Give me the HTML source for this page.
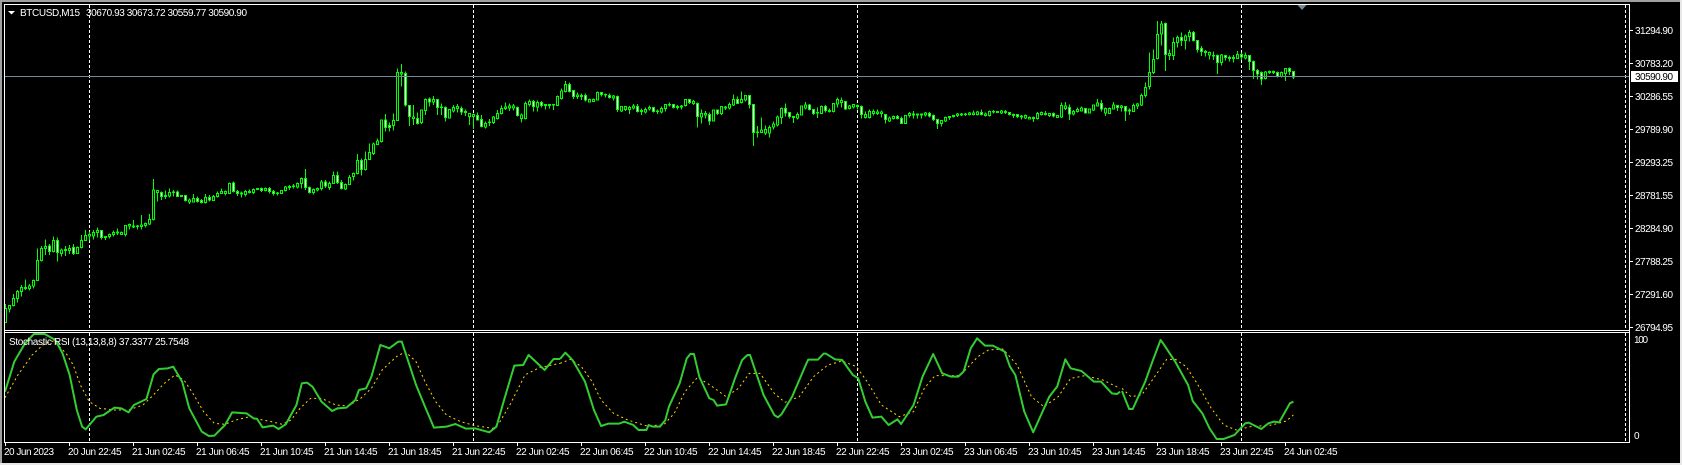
<!DOCTYPE html>
<html><head><meta charset="utf-8"><title>BTCUSD,M15</title>
<style>
html,body{margin:0;padding:0;background:#000;width:1682px;height:465px;overflow:hidden}
svg{display:block}
text{font-family:"Liberation Sans",sans-serif;font-size:10px;fill:#fff}
.w,.u,.d{stroke:#0f0;stroke-width:1;vector-effect:non-scaling-stroke;shape-rendering:crispEdges}
.w{fill:none}.u{fill:#000}.d{fill:#fff}
.g{fill:none;stroke:#32cd32;stroke-width:2;vector-effect:non-scaling-stroke;stroke-linejoin:round}
.y{fill:none;stroke:#ffd700;stroke-width:1;stroke-dasharray:2 3;vector-effect:non-scaling-stroke}
</style></head><body>
<svg width="1682" height="465" viewBox="0 0 1682 465" xmlns="http://www.w3.org/2000/svg">
<rect width="1682" height="465" fill="#000"/>
<rect x="0" y="0" width="1682" height="2" fill="#a0a0a0"/>
<rect x="0" y="0" width="2" height="465" fill="#a0a0a0"/>
<rect x="1680" y="0" width="2" height="465" fill="#e8e8e8"/>
<rect x="0" y="463" width="1682" height="2" fill="#e8e8e8"/>

<g stroke="#fff" stroke-width="1" stroke-dasharray="3 2" shape-rendering="crispEdges">
<path d="M89.5 5V330M473.5 5V330M857.5 5V330M1241.5 5V330M1625.5 5V330M89.5 333V442M473.5 333V442M857.5 333V442M1241.5 333V442M1625.5 333V442"/>
</g>

<!-- candles i0-103 -->
<g transform="scale(1,.33333)">
<path class="w" d="M5.5 912V968M9.5 915V938M13.5 882V920M17.5 870V908M21.5 855V890M25.5 838V870M29.5 852V872M33.5 838V865M37.5 745V842M41.5 738V785M45.5 718V765M49.5 732V765M53.5 710V758M57.5 712V785M61.5 745V770M65.5 738V768M69.5 735V762M73.5 732V765M77.5 740V760M81.5 705V745M85.5 690V722M89.5 695V722M93.5 690V718M97.5 682V712M101.5 690V718M105.5 708V720M109.5 700V716M113.5 692V710M117.5 686V705M121.5 695V705M125.5 675V710M129.5 670V688M133.5 660V684M137.5 675V688M141.5 645V688M145.5 668V682M149.5 642V675M153.5 537V662M157.5 570V605M161.5 575V600M165.5 572V597M169.5 565V592M173.5 570V590M177.5 572V590M181.5 585V590M185.5 585V605M189.5 596V612M193.5 582V608M197.5 590V607M201.5 597V610M205.5 582V610M209.5 585V605M213.5 585V603M217.5 575V592M221.5 565V582M225.5 572V587M229.5 548V582M233.5 545V578M237.5 570V588M241.5 575V593M245.5 570V590M249.5 568V580M253.5 566V582M257.5 565V570M261.5 562V576M265.5 563V575M269.5 561V580M273.5 570V587M277.5 576V586M281.5 570V582M285.5 558V574M289.5 555V570M293.5 552V565M297.5 548V565M301.5 532V565M305.5 507V570M309.5 560V580M313.5 565V584M317.5 562V574M321.5 540V572M325.5 540V564M329.5 545V570M333.5 514V552M337.5 514V552M341.5 540V568M345.5 550V570M349.5 525V555M353.5 517V542M357.5 462V523M361.5 475V527M365.5 455V512M369.5 430V480M373.5 428V465M377.5 415V435M381.5 358V428M385.5 342V395M389.5 368V395M393.5 340V392M397.5 205V362M401.5 192V260M405.5 215V320M409.5 315V378M413.5 315V375M417.5 337V373"/>
<path class="u" d="M4.5 925h2V968h-2zM8.5 917h2V927h-2zM12.5 895h2V917h-2zM16.5 875h2V895h-2zM20.5 862h2V875h-2zM24.5 862h2V866h-2zM28.5 858h2V866h-2zM32.5 842h2V858h-2zM36.5 782h2V842h-2zM40.5 745h2V782h-2zM44.5 740h2V746h-2zM52.5 722h2V755h-2zM60.5 750h2V760h-2zM64.5 748h2V752h-2zM68.5 745h2V752h-2zM76.5 742h2V760h-2zM80.5 722h2V742h-2zM84.5 706h2V722h-2zM88.5 704h2V708h-2zM92.5 698h2V708h-2zM96.5 692h2V698h-2zM104.5 709h2V713h-2zM108.5 703h2V710h-2zM112.5 697h2V704h-2zM116.5 696h2V699h-2zM120.5 697h2V703h-2zM124.5 677h2V704h-2zM128.5 673h2V678h-2zM132.5 678h2V681h-2zM136.5 678h2V680h-2zM140.5 675h2V680h-2zM144.5 671h2V677h-2zM148.5 658h2V672h-2zM152.5 570h2V658h-2zM156.5 572h2V578h-2zM164.5 586h2V590h-2zM168.5 577h2V588h-2zM172.5 576h2V578h-2zM180.5 587h2V590h-2zM188.5 600h2V606h-2zM192.5 596h2V606h-2zM204.5 592h2V608h-2zM212.5 589h2V601h-2zM216.5 581h2V590h-2zM220.5 574h2V581h-2zM224.5 575h2V581h-2zM228.5 550h2V581h-2zM240.5 579h2V582h-2zM244.5 574h2V584h-2zM248.5 574h2V577h-2zM252.5 568h2V578h-2zM256.5 566h2V568h-2zM264.5 566h2V572h-2zM276.5 579h2V581h-2zM280.5 571h2V581h-2zM284.5 561h2V571h-2zM288.5 559h2V563h-2zM292.5 558h2V560h-2zM296.5 551h2V561h-2zM300.5 535h2V550h-2zM312.5 569h2V578h-2zM316.5 565h2V570h-2zM320.5 546h2V565h-2zM328.5 550h2V562h-2zM332.5 526h2V550h-2zM344.5 553h2V567h-2zM348.5 532h2V553h-2zM352.5 521h2V530h-2zM356.5 481h2V521h-2zM364.5 478h2V508h-2zM368.5 457h2V478h-2zM372.5 432h2V460h-2zM376.5 423h2V433h-2zM380.5 360h2V425h-2zM392.5 361h2V376h-2zM396.5 217h2V361h-2zM400.5 218h2V222h-2zM412.5 351h2V355h-2z"/>
<path class="d" d="M48.5 738h2V755h-2zM56.5 722h2V758h-2zM72.5 742h2V760h-2zM100.5 692h2V712h-2zM160.5 577h2V590h-2zM176.5 576h2V590h-2zM184.5 587h2V602h-2zM196.5 596h2V604h-2zM200.5 601h2V607h-2zM208.5 592h2V600h-2zM232.5 549h2V575h-2zM236.5 575h2V580h-2zM260.5 565h2V571h-2zM268.5 565h2V575h-2zM272.5 574h2V580h-2zM304.5 535h2V562h-2zM308.5 562h2V578h-2zM324.5 546h2V558h-2zM336.5 526h2V548h-2zM340.5 548h2V565h-2zM360.5 481h2V508h-2zM384.5 360h2V382h-2zM388.5 376h2V382h-2zM404.5 220h2V315h-2zM408.5 317h2V350h-2zM416.5 355h2V370h-2z"/>
</g>

<!-- candles i104-281 -->
<g transform="translate(0,50) scale(1,.33333)">
<path class="w" d="M421.5 178V222M425.5 145V195M429.5 142V170M433.5 138V165M437.5 147V195M441.5 160V195M445.5 170V215M449.5 177V205M453.5 165V188M457.5 162V188M461.5 170V195M465.5 178V198M469.5 190V225M473.5 190V237M477.5 188V212M481.5 195V232M485.5 215V235M489.5 207V228M493.5 198V222M497.5 180V208M501.5 167V193M505.5 157V180M509.5 160V183M513.5 162V182M517.5 170V200M521.5 190V218M525.5 155V208M529.5 148V170M533.5 150V185M537.5 152V185M541.5 153V172M545.5 163V178M549.5 163V175M553.5 163V180M557.5 137V168M561.5 115V148M565.5 93V127M569.5 97V127M573.5 120V147M577.5 128V147M581.5 130V150M585.5 130V155M589.5 145V158M593.5 145V156M597.5 125V152M601.5 127V140M605.5 130V142M609.5 130V145M613.5 135V152M617.5 136V186M621.5 168V186M625.5 168V183M629.5 168V192M633.5 162V178M637.5 162V187M641.5 175V195M645.5 172V190M649.5 166V182M653.5 171V187M657.5 178V192M661.5 170V190M665.5 162V185M669.5 158V170M673.5 162V175M677.5 165V178M681.5 165V178M685.5 148V170M689.5 148V162M693.5 150V165M697.5 157V232M701.5 178V220M705.5 183V205M709.5 188V225M713.5 178V215M717.5 178V195M721.5 168V195M725.5 168V180M729.5 157V178M733.5 133V168M737.5 140V162M741.5 124V160M745.5 135V155M749.5 135V175M753.5 163V288M757.5 228V263M761.5 202V248M765.5 226V255M769.5 226V263M773.5 215V238M777.5 197V230M781.5 172V222M785.5 160V200M789.5 186V205M793.5 198V219M797.5 188V208M801.5 167V197M805.5 156V178M809.5 162V182M813.5 177V195M817.5 172V204M821.5 167V192M825.5 165V187M829.5 175V187M833.5 160V187M837.5 143V172M841.5 142V172M845.5 153V180M849.5 165V178M853.5 163V175M857.5 163V178M861.5 167V205M865.5 185V205M869.5 178V205M873.5 178V196M877.5 178V195M881.5 182V202M885.5 192V221M889.5 200V216M893.5 197V208M897.5 195V208M901.5 200V222M905.5 195V222M909.5 186V202M913.5 183V205M917.5 190V205M921.5 190V205M925.5 186V200M929.5 186V202M933.5 193V213M937.5 207V237M941.5 210V230M945.5 200V216M949.5 198V210M953.5 195V202M957.5 189V201M961.5 189V198M965.5 189V198M969.5 186V196M973.5 181V196M977.5 183V197M981.5 178V197M985.5 187V200M989.5 182V200M993.5 180V190M997.5 183V189M1001.5 180V192M1005.5 180V192M1009.5 186V197M1013.5 190V204M1017.5 192V204M1021.5 195V209M1025.5 193V207M1029.5 200V209M1033.5 200V216M1037.5 186V208M1041.5 185V197M1045.5 183V197M1049.5 190V201M1053.5 188V203M1057.5 195V204M1061.5 158V204M1065.5 156V180M1069.5 163V210M1073.5 180V196M1077.5 172V188M1081.5 170V185M1085.5 175V190M1089.5 177V190M1093.5 163V183M1097.5 147V170M1101.5 150V185M1105.5 172V198M1109.5 172V192M1113.5 156V178M1117.5 165V183M1121.5 165V185M1125.5 168V213M1129.5 175V195"/>
<path class="u" d="M420.5 180h2V218h-2zM424.5 148h2V182h-2zM432.5 148h2V156h-2zM440.5 171h2V173h-2zM448.5 178h2V204h-2zM452.5 172h2V183h-2zM456.5 170h2V176h-2zM464.5 184h2V188h-2zM468.5 190h2V200h-2zM472.5 193h2V200h-2zM484.5 220h2V231h-2zM488.5 216h2V218h-2zM492.5 201h2V218h-2zM496.5 190h2V206h-2zM500.5 175h2V190h-2zM504.5 171h2V176h-2zM508.5 168h2V174h-2zM512.5 168h2V174h-2zM520.5 195h2V206h-2zM524.5 160h2V206h-2zM528.5 154h2V164h-2zM536.5 157h2V171h-2zM544.5 163h2V167h-2zM548.5 163h2V167h-2zM552.5 164h2V165h-2zM556.5 139h2V166h-2zM560.5 123h2V145h-2zM564.5 103h2V125h-2zM576.5 135h2V140h-2zM580.5 136h2V140h-2zM588.5 148h2V156h-2zM592.5 148h2V155h-2zM596.5 127h2V150h-2zM604.5 133h2V135h-2zM612.5 138h2V144h-2zM620.5 170h2V183h-2zM624.5 170h2V178h-2zM628.5 172h2V178h-2zM632.5 168h2V174h-2zM640.5 181h2V184h-2zM644.5 178h2V186h-2zM648.5 172h2V177h-2zM656.5 183h2V185h-2zM660.5 175h2V186h-2zM664.5 163h2V176h-2zM668.5 163h2V165h-2zM676.5 169h2V173h-2zM680.5 168h2V171h-2zM684.5 149h2V167h-2zM692.5 155h2V161h-2zM700.5 190h2V201h-2zM704.5 190h2V195h-2zM712.5 180h2V213h-2zM720.5 169h2V190h-2zM724.5 171h2V174h-2zM728.5 163h2V174h-2zM732.5 148h2V165h-2zM740.5 148h2V158h-2zM744.5 137h2V150h-2zM756.5 246h2V248h-2zM760.5 240h2V248h-2zM764.5 238h2V249h-2zM768.5 233h2V249h-2zM772.5 222h2V231h-2zM776.5 201h2V225h-2zM780.5 175h2V203h-2zM792.5 199h2V203h-2zM796.5 193h2V204h-2zM800.5 168h2V195h-2zM804.5 165h2V174h-2zM816.5 187h2V189h-2zM820.5 169h2V191h-2zM828.5 181h2V185h-2zM832.5 160h2V185h-2zM836.5 149h2V162h-2zM840.5 151h2V157h-2zM848.5 168h2V175h-2zM852.5 164h2V171h-2zM856.5 166h2V170h-2zM864.5 193h2V203h-2zM868.5 184h2V203h-2zM872.5 184h2V191h-2zM876.5 186h2V190h-2zM880.5 186h2V190h-2zM888.5 204h2V213h-2zM892.5 199h2V206h-2zM904.5 196h2V220h-2zM908.5 191h2V197h-2zM912.5 192h2V195h-2zM916.5 192h2V195h-2zM920.5 192h2V195h-2zM924.5 189h2V195h-2zM940.5 211h2V220h-2zM944.5 202h2V213h-2zM948.5 199h2V203h-2zM952.5 196h2V200h-2zM956.5 192h2V197h-2zM960.5 192h2V195h-2zM964.5 192h2V194h-2zM968.5 189h2V193h-2zM972.5 189h2V194h-2zM976.5 186h2V194h-2zM984.5 192h2V197h-2zM988.5 184h2V197h-2zM992.5 184h2V186h-2zM996.5 184h2V188h-2zM1000.5 183h2V189h-2zM1004.5 184h2V188h-2zM1012.5 193h2V196h-2zM1020.5 198h2V201h-2zM1024.5 197h2V204h-2zM1028.5 202h2V207h-2zM1032.5 203h2V205h-2zM1036.5 190h2V206h-2zM1040.5 188h2V194h-2zM1044.5 190h2V193h-2zM1048.5 191h2V196h-2zM1056.5 196h2V202h-2zM1060.5 166h2V201h-2zM1064.5 168h2V176h-2zM1072.5 184h2V192h-2zM1076.5 178h2V184h-2zM1080.5 174h2V183h-2zM1088.5 177h2V189h-2zM1092.5 165h2V180h-2zM1096.5 159h2V168h-2zM1104.5 176h2V189h-2zM1108.5 175h2V190h-2zM1112.5 165h2V177h-2zM1120.5 168h2V173h-2zM1128.5 180h2V183h-2z"/>
<path class="d" d="M428.5 147h2V156h-2zM436.5 148h2V172h-2zM444.5 172h2V203h-2zM460.5 176h2V186h-2zM476.5 196h2V210h-2zM480.5 208h2V230h-2zM516.5 172h2V197h-2zM532.5 154h2V170h-2zM540.5 157h2V167h-2zM568.5 103h2V125h-2zM572.5 122h2V140h-2zM584.5 136h2V150h-2zM600.5 127h2V133h-2zM608.5 136h2V143h-2zM616.5 139h2V178h-2zM636.5 169h2V185h-2zM652.5 172h2V185h-2zM672.5 163h2V173h-2zM688.5 149h2V158h-2zM696.5 160h2V200h-2zM708.5 194h2V213h-2zM716.5 180h2V190h-2zM736.5 148h2V160h-2zM748.5 136h2V164h-2zM752.5 164h2V248h-2zM784.5 175h2V189h-2zM788.5 187h2V200h-2zM808.5 165h2V178h-2zM812.5 178h2V190h-2zM824.5 169h2V182h-2zM844.5 155h2V177h-2zM860.5 169h2V194h-2zM884.5 193h2V209h-2zM896.5 199h2V205h-2zM900.5 205h2V220h-2zM928.5 190h2V198h-2zM932.5 196h2V208h-2zM936.5 208h2V221h-2zM980.5 187h2V193h-2zM1008.5 187h2V194h-2zM1016.5 194h2V200h-2zM1052.5 191h2V198h-2zM1068.5 172h2V192h-2zM1084.5 175h2V189h-2zM1100.5 160h2V177h-2zM1116.5 166h2V173h-2zM1124.5 169h2V183h-2z"/>
</g>

<!-- candles i282-322 -->
<g transform="scale(1,.33333)">
<path class="w" d="M1133.5 310V336M1137.5 309V327M1141.5 280V318M1145.5 247V292M1149.5 157V268M1153.5 148V222M1157.5 63V178M1161.5 63V137M1165.5 68V213M1169.5 148V180M1173.5 113V180M1177.5 107V143M1181.5 97V138M1185.5 103V148M1189.5 90V125M1193.5 93V125M1197.5 120V157M1201.5 138V168M1205.5 150V170M1209.5 155V178M1213.5 155V180M1217.5 163V222M1221.5 162V197M1225.5 165V182M1229.5 167V185M1233.5 165V187M1237.5 153V177M1241.5 157V180M1245.5 157V178M1249.5 165V210M1253.5 182V237M1257.5 207V238M1261.5 215V255M1265.5 213V238M1269.5 211V222M1273.5 211V222M1277.5 215V232M1281.5 215V232M1285.5 205V243M1289.5 203V225M1293.5 213V237"/>
<path class="u" d="M1132.5 316h2V335h-2zM1136.5 312h2V318h-2zM1140.5 286h2V315h-2zM1144.5 262h2V286h-2zM1148.5 217h2V260h-2zM1152.5 178h2V218h-2zM1156.5 103h2V176h-2zM1160.5 72h2V102h-2zM1168.5 160h2V167h-2zM1172.5 127h2V167h-2zM1176.5 112h2V128h-2zM1184.5 108h2V121h-2zM1188.5 97h2V110h-2zM1204.5 154h2V158h-2zM1208.5 157h2V165h-2zM1212.5 166h2V168h-2zM1220.5 165h2V188h-2zM1228.5 172h2V176h-2zM1232.5 173h2V175h-2zM1236.5 163h2V176h-2zM1244.5 166h2V174h-2zM1264.5 216h2V236h-2zM1268.5 214h2V218h-2zM1272.5 214h2V218h-2zM1280.5 218h2V230h-2zM1284.5 206h2V220h-2z"/>
<path class="d" d="M1164.5 70h2V163h-2zM1180.5 112h2V122h-2zM1192.5 97h2V122h-2zM1196.5 122h2V148h-2zM1200.5 146h2V155h-2zM1216.5 166h2V188h-2zM1224.5 167h2V173h-2zM1240.5 163h2V171h-2zM1248.5 167h2V185h-2zM1252.5 184h2V212h-2zM1256.5 211h2V222h-2zM1260.5 218h2V237h-2zM1276.5 218h2V229h-2zM1288.5 205h2V215h-2zM1292.5 215h2V231h-2z"/>
</g>

<!-- price line -->
<rect x="5" y="76" width="1624" height="1" fill="#778899"/>
<polygon points="1297.5,5 1306.5,5 1302,10" fill="#778899"/>

<!-- Stochastic -->
<g transform="translate(0,325) scale(.35714,.33333)">
<polyline class="y" points="14,218 50,150 90,90 125,55 150,48 185,85 205,120 225,180 250,230 280,250 320,255 360,255 400,240 425,215 460,175 490,150 515,165 540,205 570,260 600,295 630,298 660,285 700,275 735,285 760,290 790,298 815,285 840,250 870,220 900,220 940,240 975,243 1010,220 1040,190 1070,135 1110,95 1135,80 1165,110 1190,170 1220,230 1250,270 1290,290 1330,302 1380,310 1400,290 1430,235 1470,150 1510,128 1568,115"/>
<polyline class="g" points="14,200 40,110 70,55 95,27 125,27 155,45 175,85 195,150 215,255 230,305 240,313 270,275 290,270 320,248 340,250 360,262 375,240 410,222 430,148 445,132 470,130 485,125 510,170 530,250 565,320 585,333 600,332 630,300 650,262 690,265 710,280 720,282 735,307 765,302 780,312 800,298 830,240 845,175 860,173 875,185 900,230 930,258 945,250 970,248 995,225 1005,195 1025,190 1040,155 1065,60 1090,70 1115,50 1125,50 1165,180 1190,245 1215,308 1250,305 1275,297 1305,311 1330,310 1370,322 1390,305 1410,230 1440,122 1465,120 1480,90 1495,105 1525,135 1550,102 1568,102"/>
</g>
<g transform="translate(560,325) scale(.35714,.33333)">
<polyline class="y" points="0,115 30,103 60,125 90,170 115,225 150,265 190,285 240,302 290,300 320,265 350,200 385,157 420,180 465,215 500,190 530,145 560,145 600,205 630,232 670,215 710,155 750,120 790,108 830,125 860,170 900,240 950,275 990,260 1020,190 1050,152 1120,152 1170,95 1200,75 1240,72 1280,120 1320,215 1355,245 1395,215 1430,160 1470,152 1520,165 1568,190"/>
<polyline class="g" points="0,102 15,83 35,105 70,170 95,255 115,303 135,296 165,296 180,290 205,300 220,315 242,315 248,300 260,305 280,305 295,285 305,245 335,175 355,100 365,87 375,87 390,155 418,220 430,225 440,242 465,238 490,160 510,105 525,90 532,90 570,210 600,270 610,277 620,268 650,215 690,115 695,104 722,104 738,86 745,86 770,103 790,105 820,150 835,160 855,230 875,278 900,275 920,300 945,283 955,297 990,240 1015,155 1045,87 1070,145 1095,155 1115,155 1130,140 1150,70 1168,40 1190,62 1212,62 1245,80 1260,125 1275,150 1300,260 1325,322 1370,215 1392,185 1415,103 1430,130 1460,138 1495,170 1515,170 1545,205 1560,207 1568,200"/>
</g>
<g transform="translate(1122,325) scale(.35714,.33333)">
<polyline class="y" points="0,190 25,215 55,210 85,165 125,103 150,103 180,125 210,175 250,250 285,300 320,315 360,305 420,300 460,288 480,270"/>
<polyline class="g" points="0,198 20,252 30,252 65,170 85,110 108,45 115,55 150,112 185,180 198,228 225,265 245,310 265,342 285,342 315,330 345,295 355,293 390,312 410,295 425,290 440,292 470,235 480,230"/>
</g>

<!-- frames -->
<g fill="#fff" shape-rendering="crispEdges">
<rect x="4" y="4" width="1626" height="1"/>
<rect x="4" y="4" width="1" height="439"/>
<rect x="1629" y="4" width="1" height="439"/>
<rect x="4" y="330" width="1626" height="1"/>
<rect x="4" y="332" width="1626" height="1"/>
<rect x="4" y="442" width="1626" height="1"/>
<!-- price ticks -->
<rect x="1630" y="30" width="3" height="1"/><rect x="1630" y="63" width="3" height="1"/><rect x="1630" y="96" width="3" height="1"/><rect x="1630" y="129" width="3" height="1"/><rect x="1630" y="162" width="3" height="1"/><rect x="1630" y="195" width="3" height="1"/><rect x="1630" y="228" width="3" height="1"/><rect x="1630" y="261" width="3" height="1"/><rect x="1630" y="294" width="3" height="1"/><rect x="1630" y="327" width="3" height="1"/>
<!-- time ticks -->
<rect x="5" y="443" width="1" height="3"/><rect x="69" y="443" width="1" height="3"/><rect x="133" y="443" width="1" height="3"/><rect x="197" y="443" width="1" height="3"/><rect x="261" y="443" width="1" height="3"/><rect x="325" y="443" width="1" height="3"/><rect x="389" y="443" width="1" height="3"/><rect x="453" y="443" width="1" height="3"/><rect x="517" y="443" width="1" height="3"/><rect x="581" y="443" width="1" height="3"/><rect x="645" y="443" width="1" height="3"/><rect x="709" y="443" width="1" height="3"/><rect x="773" y="443" width="1" height="3"/><rect x="837" y="443" width="1" height="3"/><rect x="901" y="443" width="1" height="3"/><rect x="965" y="443" width="1" height="3"/><rect x="1029" y="443" width="1" height="3"/><rect x="1093" y="443" width="1" height="3"/><rect x="1157" y="443" width="1" height="3"/><rect x="1221" y="443" width="1" height="3"/><rect x="1285" y="443" width="1" height="3"/>
</g>

<!-- header -->
<polygon points="8,11 15,11 11.5,14.5" fill="#fff"/>
<text x="20" y="16" textLength="60" lengthAdjust="spacing">BTCUSD,M15</text>
<text x="86" y="16" textLength="161" lengthAdjust="spacing">30670.93 30673.72 30559.77 30590.90</text>
<text x="9" y="345" textLength="180" lengthAdjust="spacing">Stochastic RSI (13,13,8,8) 37.3377 25.7548</text>

<!-- price labels -->
<text x="1635" y="34" textLength="38">31294.90</text>
<text x="1635" y="67" textLength="38">30783.20</text>
<rect x="1631" y="71" width="47" height="11" fill="#fff"/>
<text x="1635" y="80" textLength="38" style="fill:#000">30590.90</text>
<text x="1635" y="100" textLength="38">30286.55</text>
<text x="1635" y="133" textLength="38">29789.90</text>
<text x="1635" y="166" textLength="38">29293.25</text>
<text x="1635" y="199" textLength="38">28781.55</text>
<text x="1635" y="232" textLength="38">28284.90</text>
<text x="1635" y="265" textLength="38">27788.25</text>
<text x="1635" y="298" textLength="38">27291.60</text>
<text x="1635" y="331" textLength="38">26794.95</text>
<text x="1634" y="343" textLength="14">100</text>
<text x="1634" y="439">0</text>

<!-- time labels -->
<text x="4" y="455" textLength="50">20 Jun 2023</text>
<text x="68" y="455" textLength="53.6">20 Jun 22:45</text>
<text x="132" y="455" textLength="53.6">21 Jun 02:45</text>
<text x="196" y="455" textLength="53.6">21 Jun 06:45</text>
<text x="260" y="455" textLength="53.6">21 Jun 10:45</text>
<text x="324" y="455" textLength="53.6">21 Jun 14:45</text>
<text x="388" y="455" textLength="53.6">21 Jun 18:45</text>
<text x="452" y="455" textLength="53.6">21 Jun 22:45</text>
<text x="516" y="455" textLength="53.6">22 Jun 02:45</text>
<text x="580" y="455" textLength="53.6">22 Jun 06:45</text>
<text x="644" y="455" textLength="53.6">22 Jun 10:45</text>
<text x="708" y="455" textLength="53.6">22 Jun 14:45</text>
<text x="772" y="455" textLength="53.6">22 Jun 18:45</text>
<text x="836" y="455" textLength="53.6">22 Jun 22:45</text>
<text x="900" y="455" textLength="53.6">23 Jun 02:45</text>
<text x="964" y="455" textLength="53.6">23 Jun 06:45</text>
<text x="1028" y="455" textLength="53.6">23 Jun 10:45</text>
<text x="1092" y="455" textLength="53.6">23 Jun 14:45</text>
<text x="1156" y="455" textLength="53.6">23 Jun 18:45</text>
<text x="1220" y="455" textLength="53.6">23 Jun 22:45</text>
<text x="1284" y="455" textLength="53.6">24 Jun 02:45</text>
</svg>
</body></html>
